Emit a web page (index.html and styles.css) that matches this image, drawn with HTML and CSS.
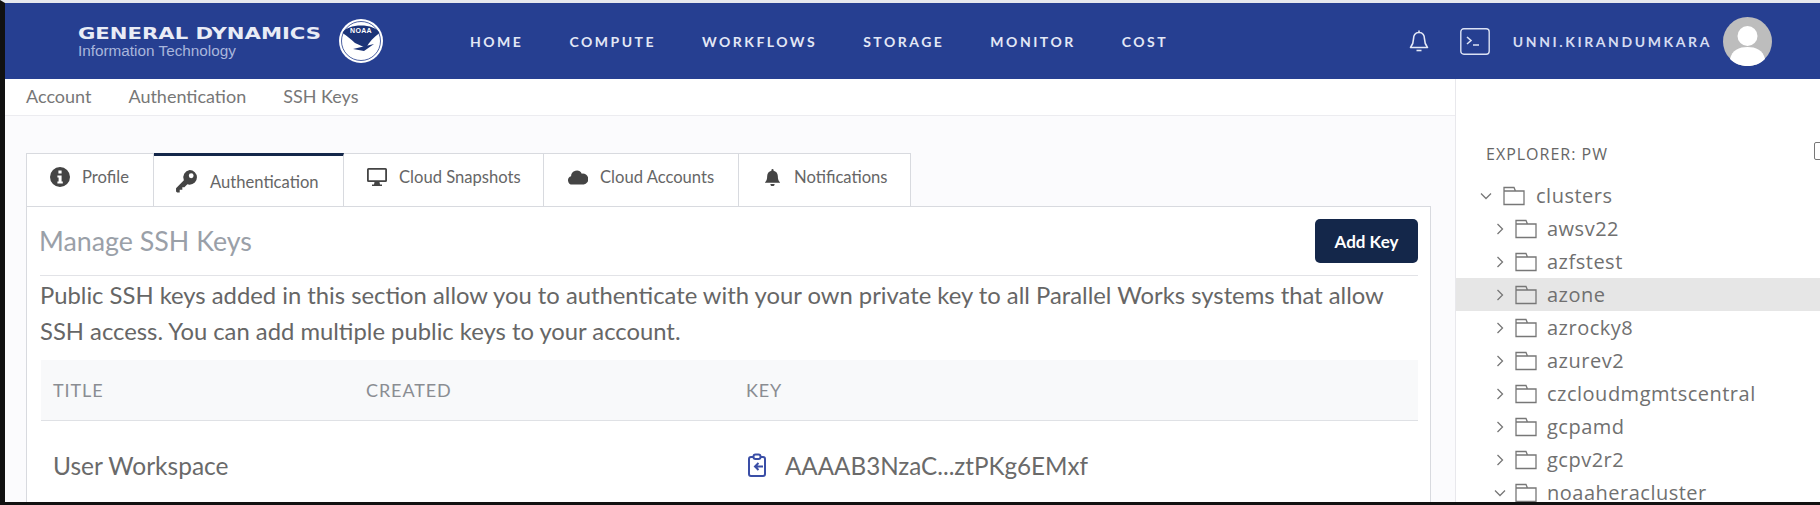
FILE: index.html
```html
<!DOCTYPE html>
<html lang="en">
<head>
  <meta charset="UTF-8" />
  <title>SSH Keys</title>
  <link rel="stylesheet" href="styles.css">
</head>
<body>
  <header class="topbar">
    <div class="brand">
      <div class="brand-name">GENERAL DYNAMICS</div>
      <div class="brand-sub">Information Technology</div>
    </div>
    <svg class="noaa" viewBox="0 0 46 46">
      <circle cx="23" cy="23" r="22" fill="#fff"/>
      <circle cx="23" cy="23" r="19.5" fill="none" stroke="#1f3a8c" stroke-width="0.8"/>
      <path d="M4.5 15 C9 5 37 5 41.5 15 C36 19 31 24 28 30 L17 25 C13 21 9 18 4.5 15Z" fill="#1c3478"/>
      <path d="M15 31 L36 26 L26 33Z" fill="#1c3478"/>
      <text class="noaa-text" x="23" y="15" text-anchor="middle">NOAA</text>
    </svg>
    <nav class="nav">
      <a>HOME</a>
      <a>COMPUTE</a>
      <a>WORKFLOWS</a>
      <a>STORAGE</a>
      <a>MONITOR</a>
      <a>COST</a>
    </nav>
    <div class="user">
      <svg class="bell" viewBox="0 0 20 24" fill="none" stroke="#e4e9f6" stroke-width="1.6" stroke-linejoin="round">
        <path d="M10 1.5 V3.5 M10 3.5 C6 3.5 4.5 6.5 4.5 10 C4.5 14 3.5 16 1.5 18.5 H18.5 C16.5 16 15.5 14 15.5 10 C15.5 6.5 14 3.5 10 3.5Z"/>
        <path d="M7.5 21.5 H12.5"/>
      </svg>
      <svg class="term" viewBox="0 0 30 27" fill="none" stroke="#dbe2f4" stroke-width="1.4">
        <rect x="0.8" y="0.8" width="28.4" height="25.4" rx="3"/>
        <path d="M7 9 L11 12.5 L7 16 M13 17 H19" stroke-width="1.6"/>
      </svg>
      <span class="username">UNNI.KIRANDUMKARA</span>
      <svg class="avatar" viewBox="0 0 49 49">
        <circle cx="24.5" cy="24.5" r="24.5" fill="#bdbdbd"/>
        <circle cx="24.5" cy="19" r="10" fill="#fff"/>
        <path d="M7 42 C9 33 16 30 24.5 30 C33 30 40 33 42 42 C37 47 31 49 24.5 49 C18 49 12 47 7 42Z" fill="#fff"/>
      </svg>
    </div>
  </header>

  <div class="page">
    <main class="main">
      <div class="crumbs">
        <span>Account</span>
        <span>Authentication</span>
        <span>SSH Keys</span>
      </div>

      <div class="content">
        <div class="tabs">
          <div class="tab tab-profile">
            <svg class="tab-icon" viewBox="0 0 20 20"><path fill-rule="evenodd" d="M10 0a10 10 0 1 0 0 20a10 10 0 0 0 0-20Zm-1.6 3.500h3.200v3h-3.200Zm-1 5h4.200v6h1.200v2H7.400v-2h1.200v-4H7.400Z" fill="#444"/></svg>
            Profile
          </div>
          <div class="tab tab-auth active">
            <svg class="tab-icon" viewBox="0 0 20 22"><path fill-rule="evenodd" d="M13 0a7 7 0 0 1 0 14c-.8 0-1.500-.1-2.200-.4L8 16.500H6v2.500H3.500v2.500H1l-1-1v-3L7.500 9.800A7 7 0 0 1 13 0Zm1.500 3.200a2.300 2.300 0 1 0 0 4.600a2.300 2.300 0 0 0 0-4.600Z" fill="#444"/></svg>
            Authentication
          </div>
          <div class="tab tab-snap">
            <svg class="tab-icon" viewBox="0 0 20 20"><path fill-rule="evenodd" d="M1.500 1h17A1.500 1.500 0 0 1 20 2.500v11a1.500 1.500 0 0 1-1.500 1.500H12.500l.5 2.500h2V19H5v-1.500h2l.5-2.500H1.500A1.500 1.500 0 0 1 0 13.500v-11A1.500 1.500 0 0 1 1.500 1Zm.3 1.800v10.400h16.400V2.800Z" fill="#444"/></svg>
            Cloud Snapshots
          </div>
          <div class="tab tab-cloud">
            <svg class="tab-icon" viewBox="0 0 21 16"><path d="M4.500 16A4.500 4.500 0 0 1 3.200 7.200A6 6 0 0 1 14.500 4.500A5.800 5.800 0 0 1 16.500 16Z" fill="#444"/></svg>
            Cloud Accounts
          </div>
          <div class="tab tab-notif">
            <svg class="tab-icon" viewBox="0 0 14 16"><path d="M7 0a1 1 0 0 1 1 1v.6c2.400.5 4 2.500 4 5 0 3.400.8 4.400 2 5.900v.5H0v-.5c1.200-1.500 2-2.500 2-5.900c0-2.500 1.600-4.500 4-5V1a1 1 0 0 1 1-1ZM5 14.200h4a2 2 0 0 1-4 0Z" fill="#444"/></svg>
            Notifications
          </div>
        </div>

        <section class="card">
          <div class="card-head">
            <h2>Manage SSH Keys</h2>
            <button type="button" class="add-btn">Add Key</button>
          </div>
          <p class="intro">Public SSH keys added in this section allow you to authenticate with your own private key to all Parallel Works systems that allow SSH access. You can add multiple public keys to your account.</p>

          <div class="table">
            <div class="table-row table-head">
              <div>TITLE</div>
              <div>CREATED</div>
              <div>KEY</div>
            </div>
            <div class="table-row table-body">
              <div>User Workspace</div>
              <div></div>
              <div class="key-cell">
                <svg class="clip" viewBox="0 0 18 24" fill="none" stroke="#3a4ea6" stroke-width="2">
                  <path d="M5 4 H3 A2 2 0 0 0 1 6 V21 A2 2 0 0 0 3 23 H15 A2 2 0 0 0 17 21 V6 A2 2 0 0 0 15 4 H13"/>
                  <rect x="5.500" y="1.500" width="7" height="4.500" rx="2"/>
                  <path d="M15 13.500 H7 M10.500 10 L7 13.500 L10.500 17"/>
                </svg>
                AAAAB3NzaC...ztPKg6EMxf
              </div>
            </div>
          </div>
        </section>
      </div>
    </main>

    <aside class="explorer">
      <div class="explorer-title">EXPLORER: PW</div>
      <div class="tree">
        <div class="node root"><svg class="chev" viewBox="0 0 12 12"><path d="M1 3.500 L6 8.500 L11 3.500"/></svg><svg class="folder" viewBox="0 0 22 20"><path d="M1 18.500 V1.500 H11 L12.500 5 H21 V18.500Z M1 5 H12.500"/></svg>clusters</div>
        <div class="node"><svg class="chev" viewBox="0 0 12 12"><path d="M3.500 1 L8.500 6 L3.500 11"/></svg><svg class="folder" viewBox="0 0 22 20"><path d="M1 18.500 V1.500 H11 L12.500 5 H21 V18.500Z M1 5 H12.500"/></svg>awsv22</div>
        <div class="node"><svg class="chev" viewBox="0 0 12 12"><path d="M3.500 1 L8.500 6 L3.500 11"/></svg><svg class="folder" viewBox="0 0 22 20"><path d="M1 18.500 V1.500 H11 L12.500 5 H21 V18.500Z M1 5 H12.500"/></svg>azfstest</div>
        <div class="node selected"><svg class="chev" viewBox="0 0 12 12"><path d="M3.500 1 L8.500 6 L3.500 11"/></svg><svg class="folder" viewBox="0 0 22 20"><path d="M1 18.500 V1.500 H11 L12.500 5 H21 V18.500Z M1 5 H12.500"/></svg>azone</div>
        <div class="node"><svg class="chev" viewBox="0 0 12 12"><path d="M3.500 1 L8.500 6 L3.500 11"/></svg><svg class="folder" viewBox="0 0 22 20"><path d="M1 18.500 V1.500 H11 L12.500 5 H21 V18.500Z M1 5 H12.500"/></svg>azrocky8</div>
        <div class="node"><svg class="chev" viewBox="0 0 12 12"><path d="M3.500 1 L8.500 6 L3.500 11"/></svg><svg class="folder" viewBox="0 0 22 20"><path d="M1 18.500 V1.500 H11 L12.500 5 H21 V18.500Z M1 5 H12.500"/></svg>azurev2</div>
        <div class="node"><svg class="chev" viewBox="0 0 12 12"><path d="M3.500 1 L8.500 6 L3.500 11"/></svg><svg class="folder" viewBox="0 0 22 20"><path d="M1 18.500 V1.500 H11 L12.500 5 H21 V18.500Z M1 5 H12.500"/></svg>czcloudmgmtscentral</div>
        <div class="node"><svg class="chev" viewBox="0 0 12 12"><path d="M3.500 1 L8.500 6 L3.500 11"/></svg><svg class="folder" viewBox="0 0 22 20"><path d="M1 18.500 V1.500 H11 L12.500 5 H21 V18.500Z M1 5 H12.500"/></svg>gcpamd</div>
        <div class="node"><svg class="chev" viewBox="0 0 12 12"><path d="M3.500 1 L8.500 6 L3.500 11"/></svg><svg class="folder" viewBox="0 0 22 20"><path d="M1 18.500 V1.500 H11 L12.500 5 H21 V18.500Z M1 5 H12.500"/></svg>gcpv2r2</div>
        <div class="node"><svg class="chev" viewBox="0 0 12 12"><path d="M1 3.500 L6 8.500 L11 3.500"/></svg><svg class="folder" viewBox="0 0 22 20"><path d="M1 18.500 V1.500 H11 L12.500 5 H21 V18.500Z M1 5 H12.500"/></svg>noaaheracluster</div>
      </div>
      <div class="panel-btn"></div>
    </aside>
  </div>
</body>
</html>
```

FILE: styles.css
```css
html, body {
  height: 100%;
}

body {
  margin: 0;
  height: 505px;
  box-sizing: border-box;
  overflow: hidden;
  display: flex;
  flex-direction: column;
  background: #fff;
  border-top: 3px solid #e6e8ee;
  border-bottom: 3px solid #111;
  border-left: 5px solid #111;
  font-family: Lato, "Liberation Sans", sans-serif;
  color: #666;
}

.topbar {
  flex: 0 0 76px;
  display: flex;
  align-items: center;
  background: #263f91;
  color: #e8ecf8;
}

.brand {
  width: 260px;
  margin-left: 73px;
  padding-top: 2px;
}

.brand-name {
  font-family: "DejaVu Sans", sans-serif;
  font-weight: 700;
  font-size: 15.500px;
  line-height: 17px;
  white-space: nowrap;
  transform: scaleX(1.365);
  transform-origin: left center;
  color: #e9ecf6;
}

.brand-sub {
  font-family: "Liberation Sans", sans-serif;
  font-size: 15.300px;
  line-height: 15px;
  color: #a9b6dc;
}

.noaa {
  width: 46px;
  height: 46px;
}

.noaa-text {
  font-family: "Liberation Sans", sans-serif;
  font-size: 7px;
  font-weight: 700;
  fill: #fff;
  letter-spacing: 0.3px;
}

.nav {
  display: flex;
  gap: 46px;
  margin-left: 86px;
  font-size: 14px;
  font-weight: 700;
  letter-spacing: 2.500px;
  color: #e3e8f6;
}

.user {
  margin-left: auto;
  display: flex;
  align-items: center;
  margin-right: 48px;
}

.bell {
  width: 20px;
  height: 24px;
}

.term {
  width: 30px;
  height: 27px;
  margin-left: 31px;
}

.username {
  margin-left: 23px;
  font-size: 14px;
  font-weight: 700;
  letter-spacing: 2.600px;
  color: #d5dcf2;
}

.avatar {
  width: 49px;
  height: 49px;
  margin-left: 11px;
}

.page {
  flex: 1;
  min-height: 0;
  display: flex;
}

.main {
  width: 1451px;
  flex: none;
  background: #fbfbfd;
  border-right: 1px solid #e8e8ec;
  box-sizing: border-box;
}

.crumbs {
  height: 37px;
  display: flex;
  align-items: center;
  gap: 37px;
  padding: 0 0 2px 21px;
  background: #fff;
  border-bottom: 1px solid #ececf0;
  box-sizing: border-box;
  font-size: 18px;
  color: #777;
}

.content {
  padding: 37px 24px 0 21px;
}

.tabs {
  display: flex;
  height: 53px;
  align-items: flex-end;
}

.tab {
  box-sizing: border-box;
  height: 53px;
  display: flex;
  align-items: center;
  border: 1px solid #d8dadf;
  border-left: 0;
  border-bottom: 0;
  background: #fff;
  font-size: 16.600px;
  color: #666;
  padding-bottom: 6px;
}

.tab-icon {
  width: 20px;
  height: 20px;
  flex: none;
}

.tab-profile {
  width: 128px;
  border-left: 1px solid #d8dadf;
  padding-left: 23px;
  gap: 12px;
}

.tab-auth {
  width: 190px;
  padding-left: 22px;
  gap: 13px;
  border-top: 3px solid #14274a;
  padding-top: 0;
  padding-bottom: 0;
  margin-bottom: -1px;
  height: 54px;
}

.tab-auth .tab-icon {
  width: 21px;
  height: 23px;
}

.tab-snap {
  width: 200px;
  padding-left: 23px;
  gap: 12px;
}

.tab-cloud {
  width: 195px;
  padding-left: 24px;
  gap: 12px;
}

.tab-notif {
  width: 172px;
  padding-left: 26px;
  gap: 14px;
}

.tab-notif .tab-icon {
  width: 15px;
  height: 17px;
}

.tab-cloud .tab-icon {
  height: 16px;
}

.card {
  position: relative;
  background: #fff;
  border: 1px solid #d8dadf;
  box-sizing: border-box;
  width: 1405px;
  height: 297px;
  padding: 12px 12px 0 13px;
  overflow: hidden;
}

.card-head {
  display: flex;
  align-items: center;
  justify-content: space-between;
  padding-bottom: 12px;
  height: 44px;
  border-bottom: 1px solid #e2e3e7;
}

.card-head h2 {
  margin: 0 0 0 -1px;
  font-size: 26.800px;
  font-weight: 400;
  color: #9aa0a8;
}

.add-btn {
  width: 103px;
  height: 44px;
  border: none;
  border-radius: 5px;
  background: #14274a;
  color: #fff;
  font-family: inherit;
  font-size: 17px;
  font-weight: 700;
}

.intro {
  margin: 0;
  font-size: 23.800px;
  line-height: 36px;
  color: #666;
  padding-top: 1px;
  height: 83px;
}

.table {
  margin-left: 1px;
}

.table-row {
  display: grid;
  grid-template-columns: 313px 380px 1fr;
  padding-left: 12px;
}

.table-head {
  height: 61px;
  align-items: center;
  background: #f8f9fa;
  border-bottom: 1px solid #dfe1e5;
  box-sizing: border-box;
  font-size: 18px;
  letter-spacing: 0.9px;
  color: #8a8d92;
}

.table-body {
  height: 88px;
  align-items: center;
  font-size: 24.500px;
  color: #6a6a6a;
}

.key-cell {
  display: flex;
  align-items: center;
  gap: 19px;
  font-size: 24.200px;
  padding-left: 2px;
}

.clip {
  width: 18px;
  height: 24px;
}

.explorer {
  position: relative;
  flex: 1;
  min-width: 0;
  background: #fff;
  font-family: "Open Sans", sans-serif;
}

.explorer-title {
  padding: 65px 0 0 30px;
  font-size: 16px;
  line-height: 20px;
  letter-spacing: 1px;
  color: #666;
}

.tree {
  margin-top: 15px;
}

.node {
  height: 33px;
  display: flex;
  align-items: center;
  padding-left: 38px;
  font-size: 20px;
  color: #707070;
  letter-spacing: 0.5px;
  white-space: nowrap;
}

.node.root {
  padding-left: 24px;
}

.node.selected {
  background: #e6e6e6;
}

.chev {
  width: 12px;
  height: 12px;
  flex: none;
  fill: none;
  stroke: #777;
  stroke-width: 1.300;
}

.folder {
  width: 22px;
  height: 20px;
  flex: none;
  margin: 0 10px 0 9px;
  fill: none;
  stroke: #777;
  stroke-width: 1.300;
}

.root .folder {
  margin: 0 11px 0 11px;
}

.panel-btn {
  position: absolute;
  top: 63px;
  right: -12px;
  width: 16px;
  height: 16px;
  border: 1px solid #777;
  border-radius: 2px;
}
```
